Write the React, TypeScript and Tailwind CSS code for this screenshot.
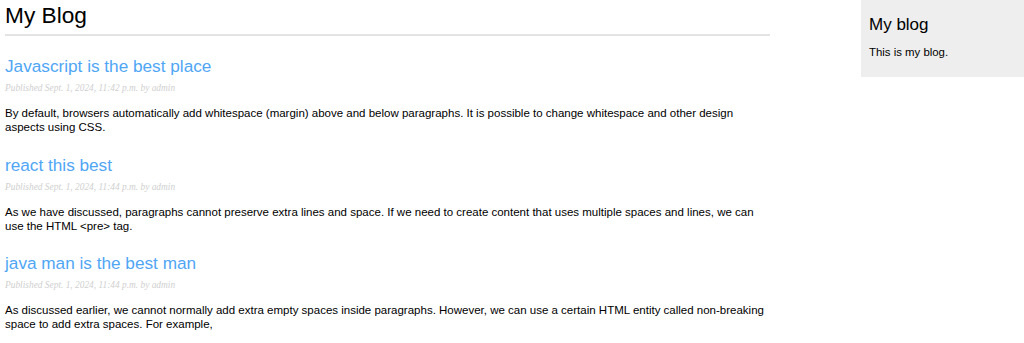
import React from "react";

const posts = [
  {
    title: "Javascript is the best place",
    date: "Published Sept. 1, 2024, 11:42 p.m. by admin",
    body: "By default, browsers automatically add whitespace (margin) above and below paragraphs. It is possible to change whitespace and other design aspects using CSS.",
  },
  {
    title: "react this best",
    date: "Published Sept. 1, 2024, 11:44 p.m. by admin",
    body: "As we have discussed, paragraphs cannot preserve extra lines and space. If we need to create content that uses multiple spaces and lines, we can use the HTML <pre> tag.",
  },
  {
    title: "java man is the best man",
    date: "Published Sept. 1, 2024, 11:44 p.m. by admin",
    body: "As discussed earlier, we cannot normally add extra empty spaces inside paragraphs. However, we can use a certain HTML entity called non-breaking space to add extra spaces. For example,",
  },
];

export default function App() {
  return (
    <div className="flex justify-between bg-white min-h-[343px] font-['Liberation_Sans',Arial,sans-serif] text-black">
      <main className="w-[770px] pl-[5px]">
        <h1 className="mt-[2px] text-[22.7px] leading-[26px] font-normal">My Blog</h1>
        <div className="mt-[6px] h-[2px] bg-[#e3e3e3]" />

        {posts.map((post) => (
          <article key={post.title} className="mt-[20.3px]">
            <h2 className="text-[17.2px] leading-[20px] font-normal text-[#4fa6f5]">
              <a href="#">{post.title}</a>
            </h2>
            <p className="mt-[6px] text-[9.4px] leading-[12px] italic text-[#cfcfcf] font-['Liberation_Serif',Georgia,serif]">
              {post.date}
            </p>
            <p className="mt-[12px] w-[760px] text-[11.5px] leading-[14px]">{post.body}</p>
          </article>
        ))}
      </main>

      <aside className="w-[163px] h-[77px] bg-[#eeeeee] pl-[8px] pt-[15px]">
        <h3 className="text-[17px] leading-[20px] font-normal">My blog</h3>
        <p className="mt-[10px] text-[11.4px] leading-[14px]">This is my blog.</p>
      </aside>
    </div>
  );
}
